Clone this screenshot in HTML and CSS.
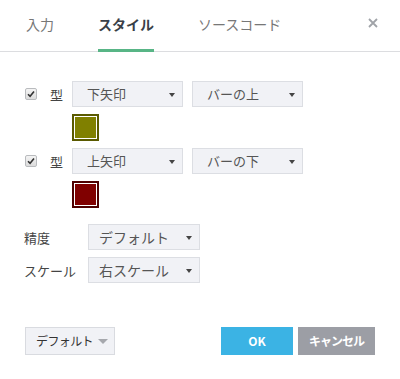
FILE: index.html
```html
<!DOCTYPE html>
<html lang="ja">
<head>
  <meta charset="UTF-8" />
  <title>スタイル</title>
  <link rel="stylesheet" href="styles.css">
</head>
<body>
  <div class="dialog">
    <div class="tabs">
      <div class="tab">入力</div>
      <div class="tab active">スタイル</div>
      <div class="tab">ソースコード</div>
      <div class="close">
        <svg width="10" height="10" viewBox="0 0 10 10"><path d="M1 1L9 9M9 1L1 9" stroke="#a0a3a8" stroke-width="1.8"/></svg>
      </div>
    </div>

    <div class="body">
      <div class="row">
        <span class="check"><svg width="8" height="8" viewBox="0 0 8 8"><path d="M1 4.2L3.1 6.3L7 1.6" stroke="#333" stroke-width="1.6" fill="none"/></svg></span>
        <span class="label">型</span>
        <div class="select">下矢印<i class="caret"></i></div>
        <div class="select">バーの上<i class="caret"></i></div>
      </div>
      <div class="swatch-row"><span class="swatch olive"><b></b></span></div>

      <div class="row">
        <span class="check"><svg width="8" height="8" viewBox="0 0 8 8"><path d="M1 4.2L3.1 6.3L7 1.6" stroke="#333" stroke-width="1.6" fill="none"/></svg></span>
        <span class="label">型</span>
        <div class="select">上矢印<i class="caret"></i></div>
        <div class="select">バーの下<i class="caret"></i></div>
      </div>
      <div class="swatch-row"><span class="swatch maroon"><b></b></span></div>

      <div class="field first">
        <span class="field-label">精度</span>
        <div class="select wide">デフォルト<i class="caret"></i></div>
      </div>
      <div class="field">
        <span class="field-label">スケール</span>
        <div class="select wide">右スケール<i class="caret"></i></div>
      </div>
    </div>

    <div class="footer">
      <div class="btn-default">デフォルト<i class="caret grey"></i></div>
      <div class="actions">
        <div class="btn ok">OK</div>
        <div class="btn cancel">キャンセル</div>
      </div>
    </div>
  </div>
</body>
</html>
```

FILE: styles.css
```css
body {
  margin: 0;
  padding: 0;
  background: #fff;
  font-family: "Noto Sans CJK JP", "Noto Sans", sans-serif;
  color: #555;
}
.dialog {
  width: 400px;
  height: 379px;
}
.tabs {
  display: flex;
  align-items: flex-end;
  height: 52px;
  padding-left: 26px;
  border-bottom: 1px solid #dcdde0;
  box-sizing: border-box;
  position: relative;
  gap: 44px;
}
.tab {
  font-size: 14px;
  line-height: 20px;
  color: #777;
  padding-bottom: 15px;
  border-bottom: 3px solid transparent;
  margin-bottom: -1px;
}
.tab.active {
  font-weight: bold;
  color: #3a3f48;
  border-bottom-color: #58b586;
}
.close {
  position: absolute;
  right: 22px;
  top: 18px;
}
.close svg {
  display: block;
}
.body {
  padding: 29px 0 0 25px;
}
.row {
  display: flex;
  align-items: center;
  height: 26px;
}
.check {
  width: 10px;
  height: 10px;
  border: 1px solid #b9bbbe;
  border-radius: 2px;
  background: linear-gradient(#f4f4f4, #dcdcdc);
  display: flex;
  align-items: center;
  justify-content: center;
}
.label {
  font-size: 13px;
  color: #444;
  margin-left: 13px;
  width: 22px;
}
.select {
  position: relative;
  width: 111px;
  height: 26px;
  box-sizing: border-box;
  background: #f1f2f6;
  border: 1px solid #dcdee3;
  font-size: 13px;
  line-height: 24px;
  padding-left: 14px;
  color: #555;
  margin-right: 9px;
}
.select.wide {
  width: 112px;
  font-size: 14px;
  padding-left: 10px;
}
.caret {
  position: absolute;
  right: 7px;
  top: 11px;
  width: 0;
  height: 0;
  border-left: 3.5px solid transparent;
  border-right: 3.5px solid transparent;
  border-top: 4px solid #444;
}
.caret.grey {
  border-left-width: 5px;
  border-right-width: 5px;
  border-top: 5px solid #a6a8ad;
  right: 6px;
  top: 11px;
}
.swatch-row {
  padding-left: 47px;
  margin: 7px 0;
  height: 27px;
}
.swatch {
  display: block;
  width: 27px;
  height: 27px;
  box-sizing: border-box;
  padding: 1px;
  background: #fff;
}
.swatch b {
  display: block;
  width: 100%;
  height: 100%;
}
.olive { border: 2px solid #5a5a00; }
.olive b { background: #808000; }
.maroon { border: 2px solid #4f0000; }
.maroon b { background: #800000; }
.field {
  display: flex;
  align-items: center;
  margin-top: 7px;
}
.field.first {
  margin-top: 16px;
}
.field-label {
  width: 64px;
  margin-left: -1px;
  font-size: 13px;
  color: #444;
  white-space: nowrap;
}
.footer {
  display: flex;
  justify-content: space-between;
  padding: 44px 25px 0 25px;
}
.btn-default {
  position: relative;
  width: 90px;
  height: 28px;
  box-sizing: border-box;
  background: #f1f2f6;
  border: 1px solid #d9dbe0;
  font-size: 12px;
  line-height: 26px;
  color: #333;
  padding-left: 10px;
  letter-spacing: -0.6px;
}
.actions {
  display: flex;
  gap: 5px;
}
.btn {
  height: 28px;
  line-height: 28px;
  text-align: center;
  color: #fff;
  font-weight: bold;
  font-size: 12px;
}
.ok {
  width: 72px;
  background: #3bb3e4;
}
.cancel {
  width: 77px;
  background: #9c9ea5;
  letter-spacing: -1px;
}
```
